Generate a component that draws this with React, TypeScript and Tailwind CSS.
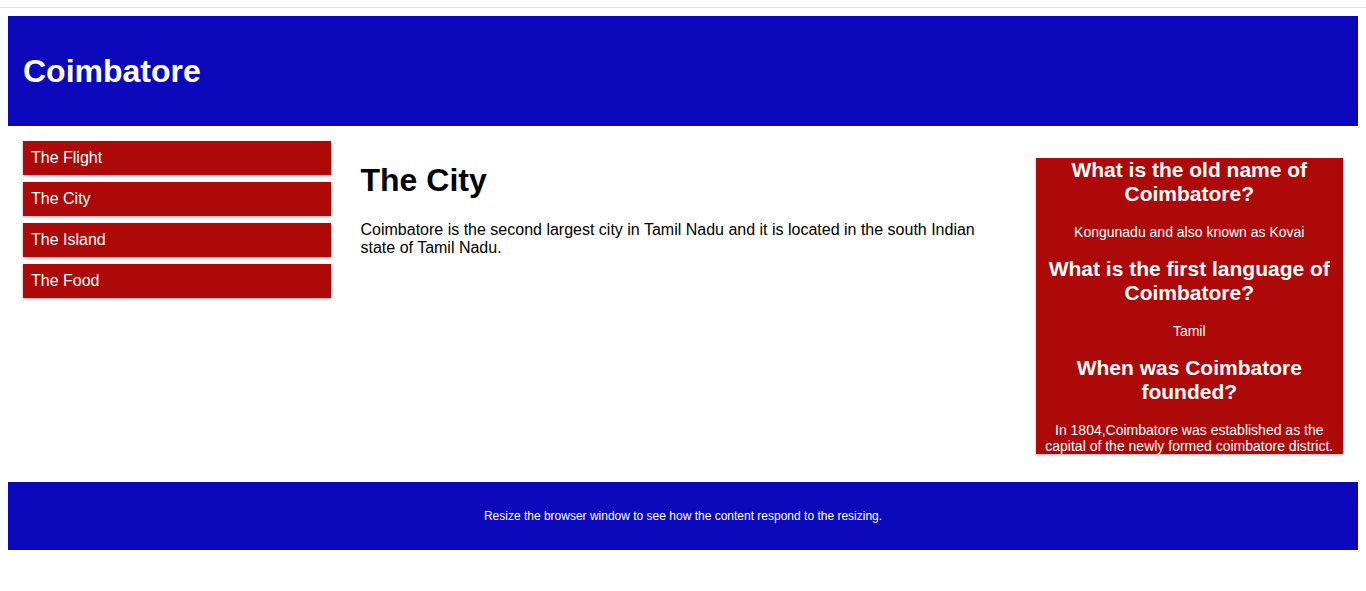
const menu = ["The Flight", "The City", "The Island", "The Food"];

const faq = [
  {
    q: "What is the old name of Coimbatore?",
    a: "Kongunadu and also known as Kovai",
  },
  {
    q: "What is the first language of Coimbatore?",
    a: "Tamil",
  },
  {
    q: "When was Coimbatore founded?",
    a: "In 1804,Coimbatore was established as the capital of the newly formed coimbatore district.",
  },
];

const App = () => {
  return (
    <div className="min-h-screen bg-white font-['Liberation_Sans',Arial,sans-serif] text-black">
      {/* browser-ish top rule */}
      <div className="h-[7px]" />
      <div className="h-px bg-[#dddddd]" />

      <div className="px-[8px] pt-[8px]">
        {/* header */}
        <header className="h-[110px] bg-[#0c09bc] px-[15px] flex items-center">
          <h1 className="text-[32px] font-bold leading-[37px] text-white">Coimbatore</h1>
        </header>

        {/* row */}
        <div className="flex">
          {/* menu */}
          <div className="w-1/4 p-[15px]">
            <ul className="flex flex-col gap-[7px]">
              {menu.map((m) => (
                <li
                  key={m}
                  className="bg-[#ad0909] p-[8px] text-[16px] leading-[18px] text-white shadow-[0_1px_3px_rgba(0,0,0,0.12),0_1px_2px_rgba(0,0,0,0.24)]"
                >
                  {m}
                </li>
              ))}
            </ul>
          </div>

          {/* content */}
          <div className="w-1/2 px-[15px] pt-[36px]">
            <h1 className="text-[32px] font-bold leading-[37px]">The City</h1>
            <p className="mt-[22px] text-[16px] leading-[18px]">
              Coimbatore is the second largest city in Tamil Nadu and it is located in the south Indian
              state of Tamil Nadu.
            </p>
          </div>

          {/* aside */}
          <div className="w-1/4 px-[15px] pt-[32px] pb-[28px]">
            <div className="bg-[#ad0909] text-center text-[14px] text-white shadow-[0_1px_3px_rgba(0,0,0,0.12),0_1px_2px_rgba(0,0,0,0.24)]">
              {faq.map((f, i) => (
                <div key={i} className={i > 0 ? "mt-[17.5px]" : ""}>
                  <h2 className="text-[21px] font-bold leading-[24px]">{f.q}</h2>
                  <p className="mt-[17.5px] leading-[16px]">{f.a}</p>
                </div>
              ))}
            </div>
          </div>
        </div>

        {/* footer */}
        <footer className="bg-[#0c09bc] px-[15px] py-[27px] text-center text-[12px] leading-[14px] text-white">
          <p>Resize the browser window to see how the content respond to the resizing.</p>
        </footer>
      </div>
    </div>
  );
};

export default App;
